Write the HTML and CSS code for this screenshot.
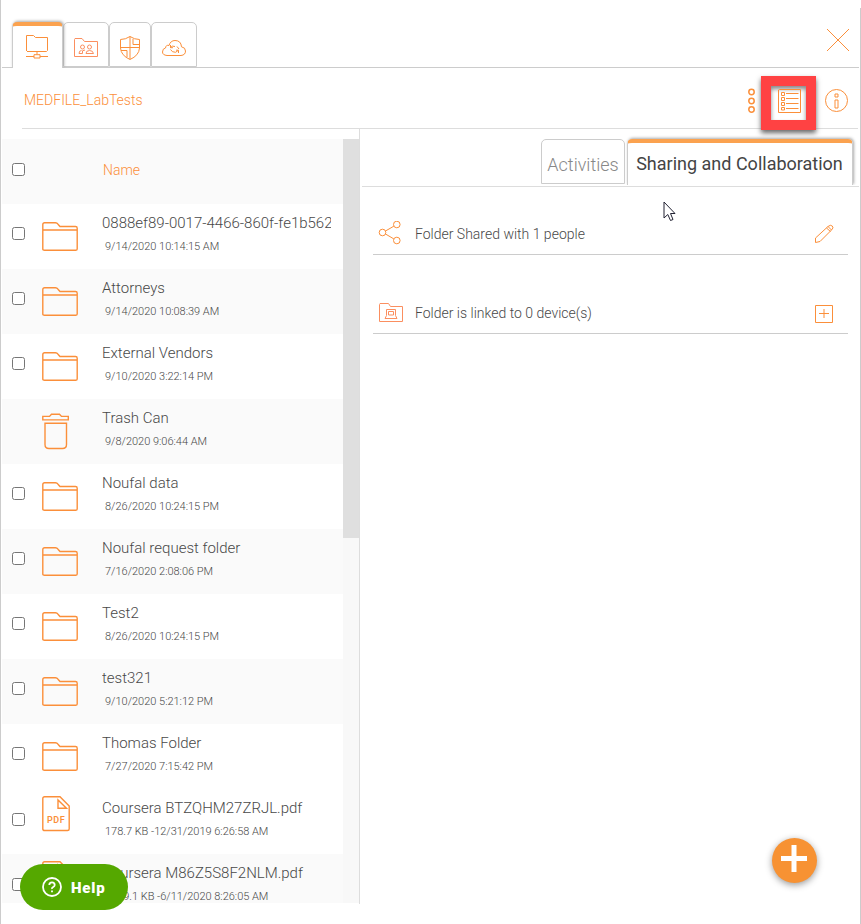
FILE: index.html
```html
<!DOCTYPE html>
<html lang="en">
<head>
<meta charset="utf-8">
<title>MEDFILE_LabTests</title>
<link rel="stylesheet" href="styles.css">
</head>
<body>
<svg class="defs" aria-hidden="true">
  <symbol id="folder" viewBox="0 0 36 30"><path d="M.8 27V2.600Q.8.8 2.600.8H13.500Q15 .8 16 2.200L18 4.500H33.500Q35.200 4.500 35.200 6.200V27Q35.200 28.300 33.500 28.300H2.600Q.8 28.300 .8 27ZM.8 8H35.200"/></symbol>
  <symbol id="trash" viewBox="0 0 28 37"><path d="M.8 3.400H7.500L9.500 1.200H17.500L19.500 3.400H26.300V6.900H.8ZM3 10.200H24.500V31.500Q24.500 35.500 20.500 35.500H7Q3 35.500 3 31.500Z"/></symbol>
  <symbol id="file" viewBox="0 0 28 36"><path d="M.8 33V2.600Q.8.8 2.600.8H18L27.200 10V33Q27.200 34.500 25.500 34.500H2.600Q.8 34.500.8 33ZM16 4V12.300H24.500Z"/></symbol>
</svg>
<div class="window">
  <header class="topbar">
    <nav class="tabs">
      <a class="tab active"><svg width="24" height="26" viewBox="0 0 24 26"><path d="M1.500 17V1.500H8.500L10.500 3.500H22.500V16.500L21.500 17.500H2M12 17.500V20.500M1 22.500H9M15 22.500H23M9 20.700H15V24H9Z"/></svg></a>
      <a class="tab t2"><svg class="pink" width="26" height="22" viewBox="0 0 26 22"><path d="M1.500 2.500V19.500H24.500V4.500H11.500L9 1.500H2Z"/><circle cx="9.500" cy="10" r="2"/><circle cx="16.500" cy="10" r="2"/><path d="M8.500 13.500Q6 13.500 6 16.500H9.500V13.800L12 13M13 16.500Q13 13.500 16.500 13.500T20.500 16.500Z"/></svg></a>
      <a class="tab t3"><svg width="22" height="26" viewBox="0 0 22 26"><path d="M11 1.500Q6.500 4.500 1.500 4.500V13Q2 20.500 11 24.500Q20 20.500 20.500 13V4.500Q15.500 4.500 11 1.500ZM11 1.500V24M1.500 12.500H20.500M14 4V9.500H20M2 15.500H8V22"/></svg></a>
      <a class="tab t4"><svg width="26" height="20" viewBox="0 0 26 20"><path d="M6 17.500H20Q24.500 17 24.500 13Q24.500 9.500 20.500 8.800Q20 2.500 14 2.500Q9.500 2.500 8 7.500Q5 6.500 4.500 10Q1.500 10.500 1.500 14Q1.500 17 6 17.500M9.500 9.500Q11 7.300 14 8.500M9.500 7V9.700H12M17 12.500Q15 15.500 11.500 13.700L9.500 11.500M17.500 15V12.200H15M16 8.500L18 11"/></svg></a>
    </nav>
    <svg class="close" width="24" height="24" viewBox="0 0 24 24"><path d="M1 1L23 23M23 1L1 23"/></svg>
  </header>
  <div class="crumbs">
    <span class="path">MEDFILE_LabTests</span>
    <div class="tools">
      <svg width="8" height="26" viewBox="0 0 8 26" class="dots"><circle cx="4.500" cy="4" r="2.700"/><circle cx="4.500" cy="13" r="2.700"/><circle cx="4.500" cy="21.500" r="2.700"/></svg>
      <span class="highlight"><svg width="25" height="26" viewBox="0 0 25 26"><path d="M3.500 1.500H24.500V24.500H2.500V2ZM5.500 4.500H8.500V7.500H5.500ZM5.500 9.500H8.500V12.500H5.500ZM5.500 14.500H8.500V17.500H5.500ZM5.500 19.500H8.500V22H5.500ZM10 5.500H22.500M10 10.500H22.500M10 15.500H22.500M10 20.500H22.500"/></svg></span>
      <svg class="info" width="24" height="24" viewBox="0 0 24 24"><circle cx="12.500" cy="12.500" r="11"/><path d="M11 6H14V9H11ZM11 12H14V20H11Z"/></svg>
    </div>
  </div>
  <main class="panes">
    <section class="list">
      <div class="rows">
        <div class="row head"><input type="checkbox"><span class="name-head">Name</span></div>
        <div class="row"><input type="checkbox"><svg class="ico folder"><use href="#folder"/></svg><div class="text"><div class="name">0888ef89-0017-4466-860f-fe1b562</div><div class="date">9/14/2020 10:14:15 AM</div></div></div>
        <div class="row"><input type="checkbox"><svg class="ico folder"><use href="#folder"/></svg><div class="text"><div class="name">Attorneys</div><div class="date">9/14/2020 10:08:39 AM</div></div></div>
        <div class="row"><input type="checkbox"><svg class="ico folder"><use href="#folder"/></svg><div class="text"><div class="name">External Vendors</div><div class="date">9/10/2020 3:22:14 PM</div></div></div>
        <div class="row"><span class="nocheck"></span><svg class="ico trash"><use href="#trash"/></svg><div class="text"><div class="name">Trash Can</div><div class="date">9/8/2020 9:06:44 AM</div></div></div>
        <div class="row"><input type="checkbox"><svg class="ico folder"><use href="#folder"/></svg><div class="text"><div class="name">Noufal data</div><div class="date">8/26/2020 10:24:15 PM</div></div></div>
        <div class="row"><input type="checkbox"><svg class="ico folder"><use href="#folder"/></svg><div class="text"><div class="name">Noufal request folder</div><div class="date">7/16/2020 2:08:06 PM</div></div></div>
        <div class="row"><input type="checkbox"><svg class="ico folder"><use href="#folder"/></svg><div class="text"><div class="name">Test2</div><div class="date">8/26/2020 10:24:15 PM</div></div></div>
        <div class="row"><input type="checkbox"><svg class="ico folder"><use href="#folder"/></svg><div class="text"><div class="name">test321</div><div class="date">9/10/2020 5:21:12 PM</div></div></div>
        <div class="row"><input type="checkbox"><svg class="ico folder"><use href="#folder"/></svg><div class="text"><div class="name">Thomas Folder</div><div class="date">7/27/2020 7:15:42 PM</div></div></div>
        <div class="row pdf"><input type="checkbox"><svg class="ico file" viewBox="0 0 28 36"><use href="#file"/><text x="5" y="26.500">PDF</text></svg><div class="text"><div class="name">Coursera BTZQHM27ZRJL.pdf</div><div class="date">178.7 KB -12/31/2019 6:26:58 AM</div></div></div>
        <div class="row pdf shaded"><input type="checkbox"><svg class="ico file" viewBox="0 0 28 36"><use href="#file"/><text x="5" y="26.500">PDF</text></svg><div class="text"><div class="name">Coursera M86Z5S8F2NLM.pdf</div><div class="date">1179.1 KB -6/11/2020 8:26:05 AM</div></div></div>
      </div>
      <div class="scrollbar"><div class="thumb"></div></div>
    </section>
    <section class="detail">
      <nav class="detail-tabs"><a class="dtab">Activities</a><a class="dtab selected">Sharing and Collaboration</a></nav>
      <div class="item share"><svg width="24" height="26" viewBox="0 0 24 26"><circle cx="4.500" cy="11.500" r="3.300"/><circle cx="18.800" cy="3.500" r="3.300"/><circle cx="18.800" cy="19.500" r="3.300"/><path d="M7.500 10L15.800 5.200M7.500 13L15.800 17.900"/></svg><span>Folder Shared with 1 people</span><svg class="action" width="20" height="20" viewBox="0 0 20 20"><path d="M1.500 18.500V14L14 2.500Q16.500.300 18.300 2T17.500 6L6 17.500ZM12.500 4L16.500 7.500M14 2.500L17.500 6"/></svg></div>
      <div class="item device"><svg class="pink" width="26" height="22" viewBox="0 0 26 22"><path d="M1.500 2.500V19.500H24.500V4.500H12.500L10.500 1.500H2ZM8.500 7.500H17.500V13.500L19 16.500H7L8.500 13.500ZM10.500 9.500H15.500V13H10.500Z"/></svg><span>Folder is linked to 0 device(s)</span><svg class="action plus" width="20" height="20" viewBox="0 0 20 20"><path d="M1.500 1.500H18.500V18.500H1.500ZM5 9.500H15M10 5V14"/></svg></div>
    </section>
  </main>
</div>
<svg class="cursor" width="14" height="22" viewBox="0 0 14 22"><path d="M1 1V17L4.800 13.500L7.500 19.500L10 18.500L7.500 12.500H12Z"/></svg>
<button class="add" aria-label="Add"><svg width="26" height="27" viewBox="0 0 26 27"><path d="M13 0V27M0 13.500H26"/></svg></button>
<button class="help"><svg width="20" height="20" viewBox="0 0 20 20"><circle cx="10" cy="10" r="9"/><path d="M7.300 8Q7.300 5.300 10 5.300T12.700 8Q12.700 9.200 11.200 10.100T10 12M10 13.400V15.200"/></svg><span>Help</span></button>
</body>
</html>
```

FILE: styles.css
```css
* { box-sizing: border-box; }
body { margin: 0; height: 924px; overflow: hidden; background: #fff; font-family: Roboto, sans-serif; font-weight: 300; color: #484848; }
.defs { display: none; }
svg { fill: none; stroke: #fb8f3a; stroke-width: 1; flex: none; }
.pink { stroke: #fb8f60; }
.window { height: 924px; border-left: 1px solid #ccc; background: linear-gradient(#ccc, #ccc) right 0 top 8px / 1px 916px no-repeat; }

.topbar { height: 68px; margin: 0 2px 0 1px; padding: 20px 9px 0 10px; display: flex; justify-content: space-between; background: linear-gradient(#ccc, #ccc) 0 67px / 100% 1px no-repeat; }
.tabs { display: flex; align-items: flex-end; }
.tab { height: 45px; width: 46px; border: 1px solid #ccc; border-radius: 5px 5px 0 0; margin-bottom: 1px; background: #fff; display: flex; align-items: center; justify-content: center; padding-top: 6px; }
.tab.active { height: 46px; width: 51px; margin-bottom: 0; border-top: 4px solid #fba24f; border-bottom: 0; box-shadow: 1px -1px 3px #aaa; clip-path: inset(-5px -5px 0 -5px); padding: 0 1px 0 0; }
.tab.t3 { width: 42px; }
.close { margin-top: 8px; }

.crumbs { height: 61px; margin: 0 3px 0 21px; border-bottom: 1px solid #ddd; display: flex; justify-content: space-between; padding: 0 10px 0 2px; }
.path { color: #fb8f3a; font-size: 14px; line-height: 64px; }
.tools { display: flex; align-items: flex-start; padding-top: 8px; }
.tools > svg { margin-top: 12px; overflow: visible; }
.tools > .dots { margin: 12px 6px 0 0; stroke-width: 1.5; }
.highlight { width: 55px; height: 54px; border: 10px solid #ff4243; margin-right: 8px; display: flex; align-items: flex-start; justify-content: center; box-shadow: 0 3px 5px #666, inset 0 3px 4px #888; padding-top: 2px; position: relative; z-index: 2; }

.panes { display: flex; }
.list { width: 358px; height: 775px; padding-top: 10px; border-right: 1px solid #ddd; margin-left: 1px; display: flex; }
.rows { width: 341px; height: 764px; overflow: hidden; }
.row { height: 65px; display: flex; padding-left: 10px; }
.row:nth-child(odd), .row.shaded { background: #fafafa; }
.row.pdf:not(.shaded) { background: #fff; }
.row input, .nocheck { width: 13px; height: 13px; margin: 23px 17px 0 0; flex: none; }
.row.pdf input, .row.head input { margin-top: 24px; }
.name-head { margin: 22px 0 0 61px; color: #fb8f3a; font-size: 14px; line-height: 18px; }
.ico { margin-right: 24px; stroke-width: 1.4; }
.folder { width: 36px; height: 30px; margin-top: 18px; }
.trash { width: 28px; height: 37px; margin-top: 14px; margin-right: 32px; }
.file { width: 28px; height: 36px; margin-top: 7px; margin-right: 32px; }
.file text { fill: #fb8f3a; stroke: none; font-size: 9px; font-weight: 600; letter-spacing: .5px; }
.text { width: 230px; padding-top: 9px; white-space: nowrap; }
.name { width: 229px; font-size: 15px; line-height: 20px; overflow: hidden; }
.date { font-size: 11px; line-height: 14px; padding: 7px 0 0 3px; letter-spacing: -.01px; }
.scrollbar { width: 16px; background: #f8f8f8; height: 764px; }
.thumb { height: 399px; background: #dfdfdf; }

.detail { flex: 1; padding: 10px 2px 0 2px; }
.detail-tabs { height: 48px; border-bottom: 1px solid #ddd; display: flex; justify-content: flex-end; gap: 2px; padding-right: 6px; }
.dtab { height: 45px; width: 84px; border: 1px solid #ccc; border-radius: 5px 5px 0 0; font-size: 18px; line-height: 49px; text-align: center; white-space: nowrap; color: #888; }
.dtab.selected { width: 226px; height: 46px; border-top: 4px solid #fba24f; border-bottom: 0; line-height: 42px; padding-right: 1px; color: #444; font-weight: 400; box-shadow: 1px -1px 3px #aaa; clip-path: inset(-5px -5px 0 -5px); }
.item { margin: 0 11px; border-bottom: 1px solid #ccc; display: flex; align-items: center; font-size: 14px; padding: 0 14px 0 5px; }
.item span { margin-left: 13px; flex: 1; }
.item.share { height: 68px; padding-top: 26px; }
.item.device { height: 79px; padding-top: 38px; }
.item.device span { margin-left: 11px; }
.plus { margin-top: 2px; }

.cursor { position: absolute; left: 663px; top: 201px; stroke: #223; fill: #fff; stroke-width: 1; }
.add { position: absolute; left: 772px; top: 838px; width: 45px; height: 45px; border: 0; border-radius: 50%; background: #f79233; box-shadow: 0 2px 7px #999; padding: 7px 0 0 9px; display: flex; }
.add svg { stroke: #fff; stroke-width: 5; }
.help { position: absolute; left: 20px; top: 864px; width: 108px; height: 46px; border: 0; border-radius: 23px; background: #55a800; color: #fff; font: 900 15px Roboto, sans-serif; letter-spacing: .8px; display: flex; align-items: center; gap: 9px; padding: 2px 0 0 22px; }
.help svg { stroke: #fff; stroke-width: 1.8; margin-top: -2px; }
```
